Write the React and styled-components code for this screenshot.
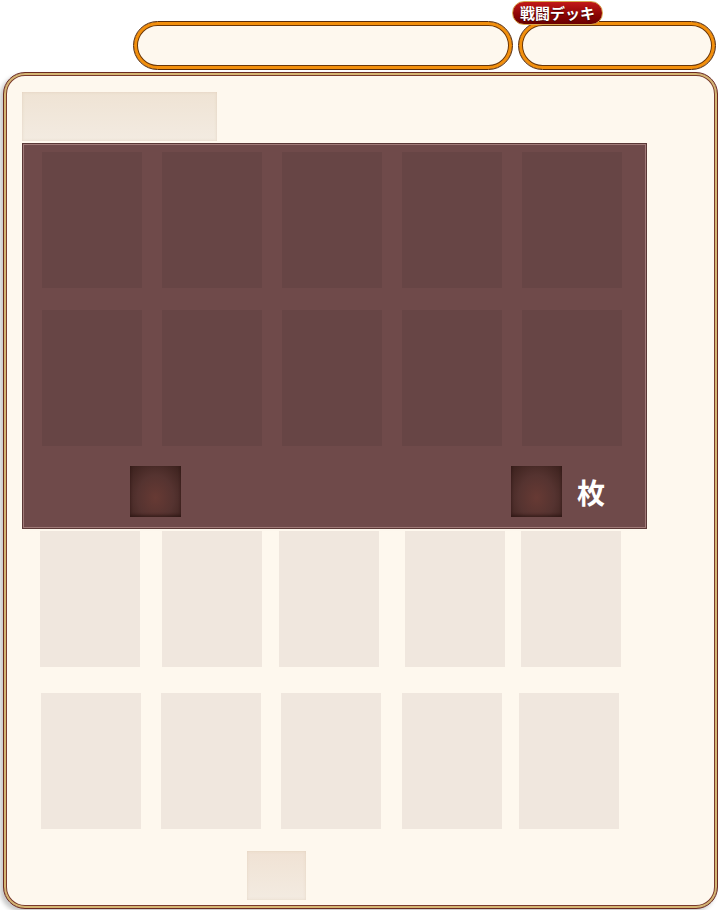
import React from 'react';
import styled, { createGlobalStyle } from 'styled-components';

const GlobalStyle = createGlobalStyle`
    html, body {
        margin: 0;
        padding: 0;
        background: #ffffff;
        font-family: "Noto Sans CJK JP", "Noto Sans", sans-serif;
    }
`;

const topSlots = [0, 1, 2, 3, 4, 5, 6, 7, 8, 9];
const rowOneOffsets = [18, 22, 17, 26, 16];
const rowTwoOffsets = [19, 20, 20, 21, 17];

const App = () => {
    return (
        <Page>
            <GlobalStyle />
            <TopBar>
                <Pill $width={380} />
                <PillWrap>
                    <Badge>戦闘デッキ</Badge>
                    <Pill $width={198} />
                </PillWrap>
            </TopBar>
            <Panel>
                <TitleBox />
                <DeckBoard>
                    <SlotGrid>
                        {topSlots.map((i) => (
                            <DarkSlot key={i} />
                        ))}
                    </SlotGrid>
                    <CountRow>
                        <Gem $ml={106} />
                        <Gem $ml={330} />
                        <CountLabel>枚</CountLabel>
                    </CountRow>
                </DeckBoard>
                <LightRow $mt={3}>
                    {rowOneOffsets.map((ml, i) => (
                        <LightSlot key={i} $ml={ml} />
                    ))}
                </LightRow>
                <LightRow $mt={26}>
                    {rowTwoOffsets.map((ml, i) => (
                        <LightSlot key={i} $ml={ml} />
                    ))}
                </LightRow>
                <PageButton />
            </Panel>
        </Page>
    );
};

const Page = styled.div`
    width: 720px;
    height: 910px;
    overflow: hidden;
`;

const TopBar = styled.div`
    display: flex;
    gap: 5px;
    padding: 21px 0 0 133px;
    height: 72px;
    box-sizing: border-box;
`;

const PillWrap = styled.div`
    position: relative;
`;

const Pill = styled.div`
    width: ${(p) => p.$width}px;
    height: 49px;
    box-sizing: border-box;
    border-radius: 25px;
    background: #fef8ee;
    border: 1px solid #5a2c08;
    box-shadow: inset 0 0 0 3px #f28f0c, inset 0 0 0 4px #6a3608;
`;

const Badge = styled.div`
    position: absolute;
    left: -6px;
    top: -20px;
    width: 91px;
    height: 24px;
    box-sizing: border-box;
    border-radius: 12px;
    border: 1px solid #d8a850;
    background: linear-gradient(#c21818, #8a0404 60%, #6a0000);
    color: #ffffff;
    font-size: 15px;
    font-weight: 700;
    line-height: 22px;
    text-align: center;
    text-shadow: 0 1px 1px #3a0000;
`;

const Panel = styled.div`
    margin: 0 2px 0 3px;
    height: 837px;
    box-sizing: border-box;
    padding: 19px 0 0 18px;
    border: 1px solid #6b2a20;
    border-radius: 22px;
    background: #fef8ee;
    box-shadow: inset 0 0 0 2px #d4b573, inset 0 0 0 3px #7a3a2c, -3px 3px 4px rgba(0, 0, 0, 0.22);
`;

const TitleBox = styled.div`
    width: 195px;
    height: 49px;
    background: linear-gradient(#efe3d4, #f3ebe1);
    box-shadow: inset 0 0 3px rgba(200, 170, 140, 0.35);
`;

const DeckBoard = styled.div`
    width: 623px;
    height: 384px;
    box-sizing: border-box;
    margin: 3px 0 0 1px;
    padding: 7px 0 0 18px;
    background: #6f4a4a;
    border: 1px solid #a07a78;
    box-shadow: 0 0 0 1px #5a3836;
`;

const SlotGrid = styled.div`
    display: grid;
    grid-template-columns: repeat(5, 100px);
    grid-auto-rows: 136px;
    column-gap: 20px;
    row-gap: 22px;
`;

const DarkSlot = styled.div`
    background: #674545;
`;

const CountRow = styled.div`
    display: flex;
    align-items: center;
    margin-top: 20px;
    margin-left: -18px;
`;

const Gem = styled.div`
    width: 51px;
    height: 51px;
    margin-left: ${(p) => p.$ml}px;
    background: radial-gradient(ellipse at 50% 62%, #673a34 0%, #553330 50%, #3a201c 100%);
    box-shadow: inset 0 -2px 3px rgba(30, 10, 8, 0.5);
`;

const CountLabel = styled.div`
    margin-left: 15px;
    color: #ffffff;
    font-size: 28px;
    font-weight: 700;
    line-height: 1;
`;

const LightRow = styled.div`
    display: flex;
    margin-top: ${(p) => p.$mt}px;
`;

const LightSlot = styled.div`
    width: 100px;
    height: 136px;
    margin-left: ${(p) => p.$ml}px;
    background: #f0e7de;
`;

const PageButton = styled.div`
    width: 59px;
    height: 49px;
    margin: 22px 0 0 225px;
    background: linear-gradient(#f0e2d4, #f3ebe1);
    box-shadow: inset 0 0 3px rgba(200, 170, 140, 0.3);
`;

export default App;
